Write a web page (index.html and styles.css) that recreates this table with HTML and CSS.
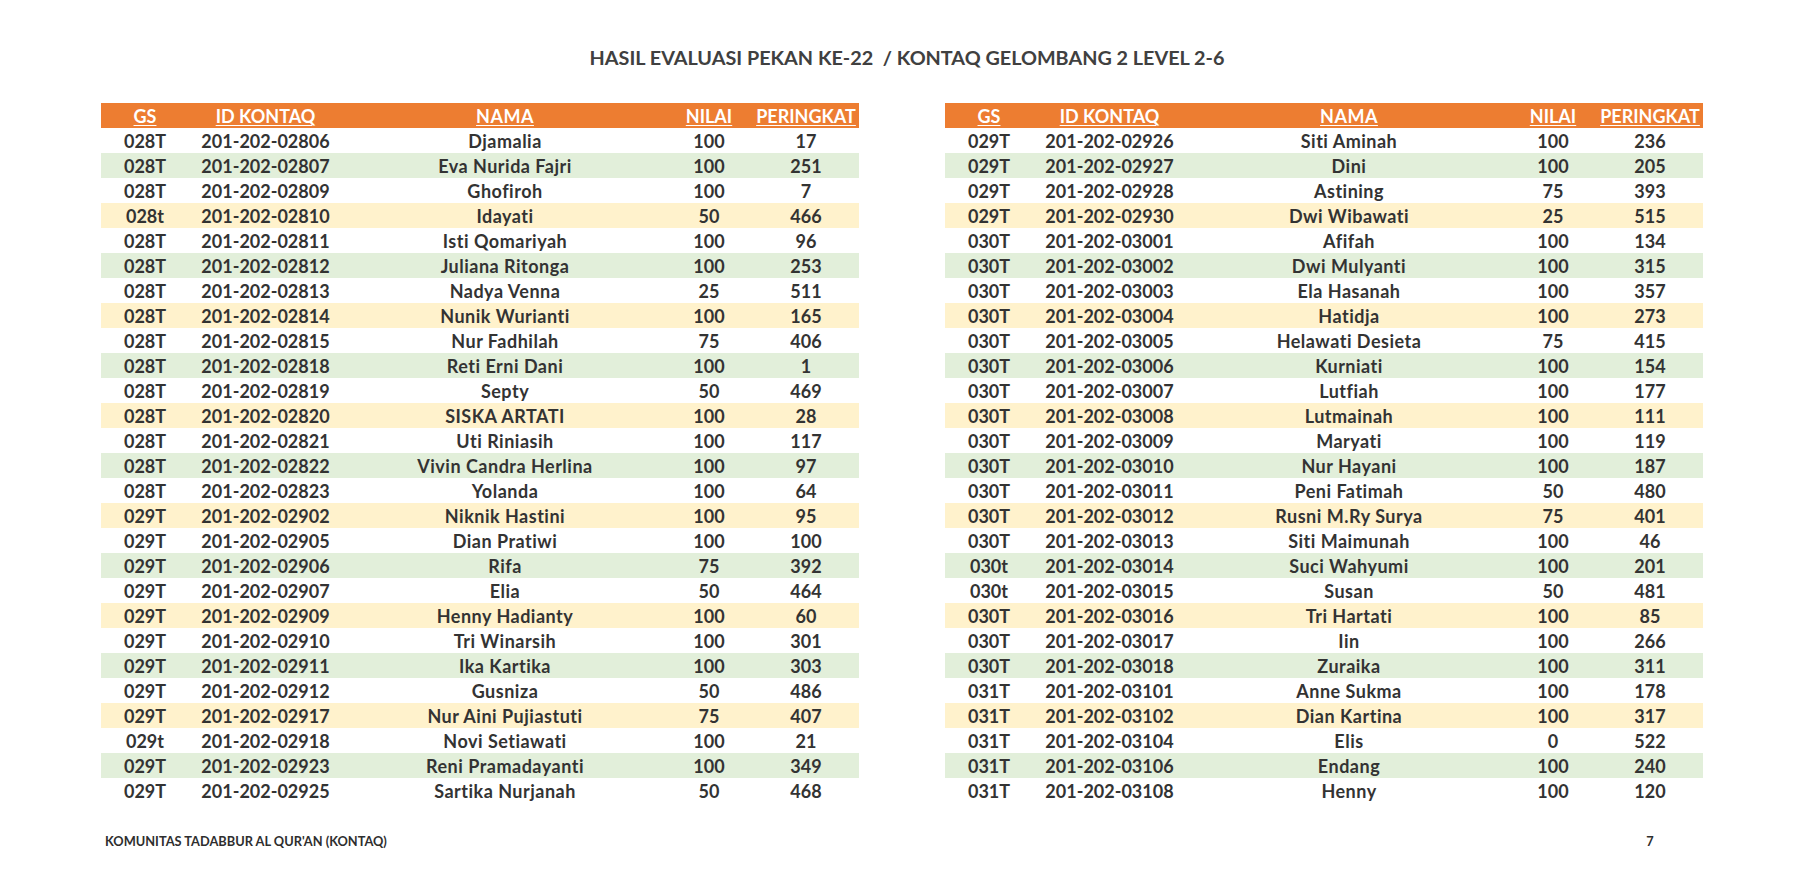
FILE: index.html
```html
<!DOCTYPE html>
<html lang="id">
<head>
<meta charset="utf-8">
<title>Hasil Evaluasi Pekan Ke-22</title>
<link rel="stylesheet" href="styles.css">
</head>
<body>
<div class="page">
  <h1 class="title">HASIL EVALUASI PEKAN KE-22&nbsp; / KONTAQ GELOMBANG 2 LEVEL 2-6</h1>
  <div class="tables">
    <div class="table">
      <div class="row head"><span class="c">GS</span><span class="c">ID KONTAQ</span><span class="c nm">NAMA</span><span class="c">NILAI</span><span class="c">PERINGKAT</span></div>
      <div class="row w"><span class="c">028T</span><span class="c">201-202-02806</span><span class="c nm">Djamalia</span><span class="c">100</span><span class="c">17</span></div>
      <div class="row g"><span class="c">028T</span><span class="c">201-202-02807</span><span class="c nm">Eva Nurida Fajri</span><span class="c">100</span><span class="c">251</span></div>
      <div class="row w"><span class="c">028T</span><span class="c">201-202-02809</span><span class="c nm">Ghofiroh</span><span class="c">100</span><span class="c">7</span></div>
      <div class="row y"><span class="c">028t</span><span class="c">201-202-02810</span><span class="c nm">Idayati</span><span class="c">50</span><span class="c">466</span></div>
      <div class="row w"><span class="c">028T</span><span class="c">201-202-02811</span><span class="c nm">Isti Qomariyah</span><span class="c">100</span><span class="c">96</span></div>
      <div class="row g"><span class="c">028T</span><span class="c">201-202-02812</span><span class="c nm">Juliana Ritonga</span><span class="c">100</span><span class="c">253</span></div>
      <div class="row w"><span class="c">028T</span><span class="c">201-202-02813</span><span class="c nm">Nadya Venna</span><span class="c">25</span><span class="c">511</span></div>
      <div class="row y"><span class="c">028T</span><span class="c">201-202-02814</span><span class="c nm">Nunik Wurianti</span><span class="c">100</span><span class="c">165</span></div>
      <div class="row w"><span class="c">028T</span><span class="c">201-202-02815</span><span class="c nm">Nur Fadhilah</span><span class="c">75</span><span class="c">406</span></div>
      <div class="row g"><span class="c">028T</span><span class="c">201-202-02818</span><span class="c nm">Reti Erni Dani</span><span class="c">100</span><span class="c">1</span></div>
      <div class="row w"><span class="c">028T</span><span class="c">201-202-02819</span><span class="c nm">Septy</span><span class="c">50</span><span class="c">469</span></div>
      <div class="row y"><span class="c">028T</span><span class="c">201-202-02820</span><span class="c nm">SISKA ARTATI</span><span class="c">100</span><span class="c">28</span></div>
      <div class="row w"><span class="c">028T</span><span class="c">201-202-02821</span><span class="c nm">Uti Riniasih</span><span class="c">100</span><span class="c">117</span></div>
      <div class="row g"><span class="c">028T</span><span class="c">201-202-02822</span><span class="c nm">Vivin Candra Herlina</span><span class="c">100</span><span class="c">97</span></div>
      <div class="row w"><span class="c">028T</span><span class="c">201-202-02823</span><span class="c nm">Yolanda</span><span class="c">100</span><span class="c">64</span></div>
      <div class="row y"><span class="c">029T</span><span class="c">201-202-02902</span><span class="c nm">Niknik Hastini</span><span class="c">100</span><span class="c">95</span></div>
      <div class="row w"><span class="c">029T</span><span class="c">201-202-02905</span><span class="c nm">Dian Pratiwi</span><span class="c">100</span><span class="c">100</span></div>
      <div class="row g"><span class="c">029T</span><span class="c">201-202-02906</span><span class="c nm">Rifa</span><span class="c">75</span><span class="c">392</span></div>
      <div class="row w"><span class="c">029T</span><span class="c">201-202-02907</span><span class="c nm">Elia</span><span class="c">50</span><span class="c">464</span></div>
      <div class="row y"><span class="c">029T</span><span class="c">201-202-02909</span><span class="c nm">Henny Hadianty</span><span class="c">100</span><span class="c">60</span></div>
      <div class="row w"><span class="c">029T</span><span class="c">201-202-02910</span><span class="c nm">Tri Winarsih</span><span class="c">100</span><span class="c">301</span></div>
      <div class="row g"><span class="c">029T</span><span class="c">201-202-02911</span><span class="c nm">Ika Kartika</span><span class="c">100</span><span class="c">303</span></div>
      <div class="row w"><span class="c">029T</span><span class="c">201-202-02912</span><span class="c nm">Gusniza</span><span class="c">50</span><span class="c">486</span></div>
      <div class="row y"><span class="c">029T</span><span class="c">201-202-02917</span><span class="c nm">Nur Aini Pujiastuti</span><span class="c">75</span><span class="c">407</span></div>
      <div class="row w"><span class="c">029t</span><span class="c">201-202-02918</span><span class="c nm">Novi Setiawati</span><span class="c">100</span><span class="c">21</span></div>
      <div class="row g"><span class="c">029T</span><span class="c">201-202-02923</span><span class="c nm">Reni Pramadayanti</span><span class="c">100</span><span class="c">349</span></div>
      <div class="row w"><span class="c">029T</span><span class="c">201-202-02925</span><span class="c nm">Sartika Nurjanah</span><span class="c">50</span><span class="c">468</span></div>
    </div>
    <div class="table">
      <div class="row head"><span class="c">GS</span><span class="c">ID KONTAQ</span><span class="c nm">NAMA</span><span class="c">NILAI</span><span class="c">PERINGKAT</span></div>
      <div class="row w"><span class="c">029T</span><span class="c">201-202-02926</span><span class="c nm">Siti Aminah</span><span class="c">100</span><span class="c">236</span></div>
      <div class="row g"><span class="c">029T</span><span class="c">201-202-02927</span><span class="c nm">Dini</span><span class="c">100</span><span class="c">205</span></div>
      <div class="row w"><span class="c">029T</span><span class="c">201-202-02928</span><span class="c nm">Astining</span><span class="c">75</span><span class="c">393</span></div>
      <div class="row y"><span class="c">029T</span><span class="c">201-202-02930</span><span class="c nm">Dwi Wibawati</span><span class="c">25</span><span class="c">515</span></div>
      <div class="row w"><span class="c">030T</span><span class="c">201-202-03001</span><span class="c nm">Afifah</span><span class="c">100</span><span class="c">134</span></div>
      <div class="row g"><span class="c">030T</span><span class="c">201-202-03002</span><span class="c nm">Dwi Mulyanti</span><span class="c">100</span><span class="c">315</span></div>
      <div class="row w"><span class="c">030T</span><span class="c">201-202-03003</span><span class="c nm">Ela Hasanah</span><span class="c">100</span><span class="c">357</span></div>
      <div class="row y"><span class="c">030T</span><span class="c">201-202-03004</span><span class="c nm">Hatidja</span><span class="c">100</span><span class="c">273</span></div>
      <div class="row w"><span class="c">030T</span><span class="c">201-202-03005</span><span class="c nm">Helawati Desieta</span><span class="c">75</span><span class="c">415</span></div>
      <div class="row g"><span class="c">030T</span><span class="c">201-202-03006</span><span class="c nm">Kurniati</span><span class="c">100</span><span class="c">154</span></div>
      <div class="row w"><span class="c">030T</span><span class="c">201-202-03007</span><span class="c nm">Lutfiah</span><span class="c">100</span><span class="c">177</span></div>
      <div class="row y"><span class="c">030T</span><span class="c">201-202-03008</span><span class="c nm">Lutmainah</span><span class="c">100</span><span class="c">111</span></div>
      <div class="row w"><span class="c">030T</span><span class="c">201-202-03009</span><span class="c nm">Maryati</span><span class="c">100</span><span class="c">119</span></div>
      <div class="row g"><span class="c">030T</span><span class="c">201-202-03010</span><span class="c nm">Nur Hayani</span><span class="c">100</span><span class="c">187</span></div>
      <div class="row w"><span class="c">030T</span><span class="c">201-202-03011</span><span class="c nm">Peni Fatimah</span><span class="c">50</span><span class="c">480</span></div>
      <div class="row y"><span class="c">030T</span><span class="c">201-202-03012</span><span class="c nm">Rusni M.Ry Surya</span><span class="c">75</span><span class="c">401</span></div>
      <div class="row w"><span class="c">030T</span><span class="c">201-202-03013</span><span class="c nm">Siti Maimunah</span><span class="c">100</span><span class="c">46</span></div>
      <div class="row g"><span class="c">030t</span><span class="c">201-202-03014</span><span class="c nm">Suci Wahyumi</span><span class="c">100</span><span class="c">201</span></div>
      <div class="row w"><span class="c">030t</span><span class="c">201-202-03015</span><span class="c nm">Susan</span><span class="c">50</span><span class="c">481</span></div>
      <div class="row y"><span class="c">030T</span><span class="c">201-202-03016</span><span class="c nm">Tri Hartati</span><span class="c">100</span><span class="c">85</span></div>
      <div class="row w"><span class="c">030T</span><span class="c">201-202-03017</span><span class="c nm">Iin</span><span class="c">100</span><span class="c">266</span></div>
      <div class="row g"><span class="c">030T</span><span class="c">201-202-03018</span><span class="c nm">Zuraika</span><span class="c">100</span><span class="c">311</span></div>
      <div class="row w"><span class="c">031T</span><span class="c">201-202-03101</span><span class="c nm">Anne Sukma</span><span class="c">100</span><span class="c">178</span></div>
      <div class="row y"><span class="c">031T</span><span class="c">201-202-03102</span><span class="c nm">Dian Kartina</span><span class="c">100</span><span class="c">317</span></div>
      <div class="row w"><span class="c">031T</span><span class="c">201-202-03104</span><span class="c nm">Elis</span><span class="c">0</span><span class="c">522</span></div>
      <div class="row g"><span class="c">031T</span><span class="c">201-202-03106</span><span class="c nm">Endang</span><span class="c">100</span><span class="c">240</span></div>
      <div class="row w"><span class="c">031T</span><span class="c">201-202-03108</span><span class="c nm">Henny</span><span class="c">100</span><span class="c">120</span></div>
    </div>
  </div>
  <footer class="footer">
    <span class="org">KOMUNITAS TADABBUR AL QUR'AN (KONTAQ)</span>
    <span class="pg">7</span>
  </footer>
</div>
</body>
</html>
```

FILE: styles.css
```css
* { box-sizing: border-box; }

html, body {
  margin: 0;
  padding: 0;
  background: #ffffff;
}

body {
  font-family: Lato, "Open Sans", "Liberation Sans", sans-serif;
  font-weight: 700;
  color: #333333;
  font-variant-ligatures: none;
}

.page {
  width: 1816px;
  height: 871px;
  padding-top: 45px;
}

.title {
  margin: 0;
  font-size: 19.8px;
  line-height: 24px;
  font-weight: 700;
  color: #404040;
  text-align: center;
  white-space: pre;
  padding-right: 2px;
}

.tables {
  display: flex;
  gap: 86px;
  margin-top: 34px;
  padding-left: 101px;
}

.table {
  width: 758px;
  display: flex;
  flex-direction: column;
}

.row {
  display: grid;
  grid-template-columns: 82px 159px 320px 88px 106px;
  padding-left: 3px;
  height: 25px;
  font-size: 18px;
  line-height: 25px;
}

.c {
  display: flex;
  justify-content: center;
  white-space: nowrap;
  padding-top: 1px;
}

.c.nm {
  letter-spacing: 0.5px;
}

.row.head {
  background: #ed7d31;
  color: #ffffff;
}

.row.head .c {
  text-decoration: underline;
  text-decoration-thickness: 1px;
  text-underline-offset: 2px;
}

.row.w { background: #ffffff; }
.row.g { background: #e2efda; }
.row.y { background: #fff2cc; }

.footer {
  display: flex;
  justify-content: space-between;
  margin-top: 31px;
  padding-left: 105px;
  width: 1703px;
  font-size: 12.8px;
  line-height: 14px;
  color: #2e2e2e;
}

.pg {
  width: 106px;
  text-align: center;
}
```
